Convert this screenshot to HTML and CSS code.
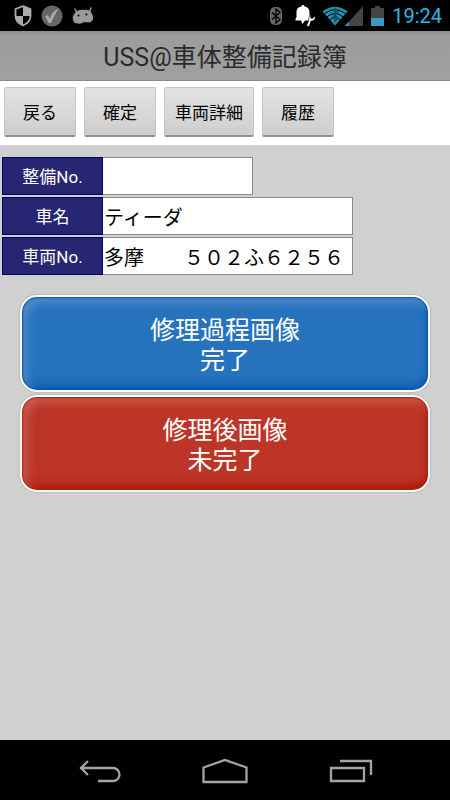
FILE: index.html
```html
<!DOCTYPE html>
<html lang="ja">
<head>
<meta charset="utf-8">
<meta name="viewport" content="width=device-width, initial-scale=1">
<title>USS@車体整備記録簿</title>
<link rel="stylesheet" href="styles.css">
</head>
<body>
<div class="status">
  <div class="status-group notices">
    <svg width="18" height="22" viewBox="0 0 18 22"><path d="M9 1.200 16.500 4v7c0 4.600-3.200 7.600-7.500 9.500C4.700 18.600 1.500 15.600 1.500 11V4z" fill="#000" stroke="#aaa" stroke-width="1.800"/><path d="M9 1.500V11h7.500V4zM9 11v9.500C4.700 18.600 1.500 15.600 1.500 11z" fill="#aaa"/></svg>
    <svg width="22" height="22" viewBox="0 0 22 22"><circle cx="11" cy="11" r="10.500" fill="#666"/><path d="M4 11.500 6.800 10 8.500 13.500C10.500 9 13 5.500 17.500 3.500 14.500 8 12.500 12.500 10 18H7.500C6.500 15.500 5.500 13.500 4 11.500z" fill="#aaa"/></svg>
    <svg width="22" height="18" viewBox="0 0 22 18"><path d="M3 2 5 6M19 1l-2 5" stroke="#999" stroke-width="1.500" stroke-linecap="round"/><path d="M3 6C5 3 9 2.500 12 3c4-1 7 1 8 4 1.500 2.500 1.500 5 0 7-2 2-5 1.500-8 1-2 1.500-4 2-6 1.500C3 16.500 1 15 1 12.500 0 10 1.500 8 3 6z" fill="#999"/><circle cx="6.500" cy="8.500" r="1" fill="#000"/><circle cx="14.500" cy="7.500" r="1" fill="#000"/></svg>
  </div>
  <div class="status-group">
    <svg class="bluetooth" width="14" height="20" viewBox="0 0 14 20"><rect x="1" y="1" width="12" height="18" rx="5" fill="#666"/><path d="m3 6.500 8 7-4 3.500V3l4 3.500-8 7" fill="none" stroke="#000" stroke-width="1.300"/></svg>
    <svg class="bell" width="21" height="22" viewBox="0 0 21 22"><path d="M8 0c1 0 1.500.6 1.500 1.500C13 2 14.500 4.500 14.500 7.500V12l-1 3.500H10L7.500 19 6 15.500H.5V14L1.500 12V7.500c0-3 1.500-5.500 5-6C6.500.6 7 0 8 0z" fill="#fff"/><path d="m11.500 21 2.500-6c-1-2 0-4 2-5l-.5 3 2 .5 2.500-2.500c1 3-1.500 5-4 5L14 21.500z" fill="#fff" stroke="#000" stroke-width=".5"/></svg>
    <svg class="wifi" width="26" height="20" viewBox="0 0 26 20"><path d="M.5 5.500C8-1 18-1 25.500 5.500L13 19.500z" fill="#238eb4"/><path d="M2.500 8c6-5.500 15-5.500 21 0M5 11c5-4.500 11-4.500 16 0M8 14c3-3 7-3 10 0" stroke="#000" stroke-width="1" fill="none"/><path d="m10 7 6 5-3 3V3l3 3-6 6" fill="none" stroke="#174f61" stroke-width="1.500"/></svg>
    <svg class="signal" width="18" height="20" viewBox="0 0 18 20"><path d="M18 0v20H0z" fill="#444"/><path d="M4 15.500V20H0z" fill="#269bc6"/></svg>
    <svg class="battery" width="13" height="20" viewBox="0 0 13 20"><path d="M4 0h5v2h4v10H0V2h4z" fill="#444"/><path d="M0 12h13v8H0z" fill="#389ac0"/></svg>
    <time class="clock">19:24</time>
  </div>
</div>
<header class="title"><h1>USS@車体整備記録簿</h1></header>
<div class="toolbar">
  <button type="button">戻る</button>
  <button type="button">確定</button>
  <button type="button" class="wide">車両詳細</button>
  <button type="button">履歴</button>
</div>
<main>
  <form class="record">
    <div class="row short"><label for="number">整備No.</label><input id="number" type="text"></div>
    <div class="row"><label for="name">車名</label><input id="name" type="text" value="ティーダ"></div>
    <div class="row"><label for="plate">車両No.</label><input id="plate" type="text" value="多摩　　５０２ふ６２５６"></div>
  </form>
  <div class="actions">
    <button type="button" class="action blue">修理過程画像<br>完了</button>
    <button type="button" class="action red">修理後画像<br>未完了</button>
  </div>
</main>
<nav class="system">
  <button type="button" aria-label="戻る"><svg width="44" height="24" viewBox="0 0 44 24"><path d="M3 9h33a6 6 0 0 1 0 13H21M11 2 4 9l7 7" fill="none" stroke="#a3a3a3" stroke-width="2.300"/></svg></button>
  <button type="button" aria-label="ホーム"><svg width="46" height="26" viewBox="0 0 46 26"><path d="M1.500 9.500 23 2l21.500 7.500V24h-43z" fill="none" stroke="#a3a3a3" stroke-width="2.300"/></svg></button>
  <button type="button" aria-label="履歴"><svg width="44" height="24" viewBox="0 0 44 24"><path d="M2 9h33v13H2zM11 2h31v14" fill="none" stroke="#a3a3a3" stroke-width="2.300"/></svg></button>
</nav>
</body>
</html>
```
FILE: styles.css
```css
* { box-sizing: border-box; }

body {
  margin: 0;
  min-height: 100vh;
  display: flex;
  flex-direction: column;
  background: #d0d0d0;
  color: #000;
  font-family: Roboto, "Noto Sans CJK JP", sans-serif;
}

button, input { font: inherit; margin: 0; }
svg { display: block; flex: none; }

.status {
  display: flex;
  justify-content: space-between;
  align-items: center;
  height: 31px;
  padding: 0 8px 0 14px;
  background: #000;
}
.status-group { display: flex; align-items: center; }
.notices { gap: 9px; }
.bell { margin-left: 12px; }
.wifi { margin-left: 6px; }
.signal { margin-left: -3px; }
.battery { margin-left: 8px; }
.clock {
  margin-left: 8px;
  color: #33b5e5;
  font-size: 20px;
  line-height: 30px;
}

.title {
  height: 50px;
  padding-top: 2px;
  border-bottom: 1px solid #888;
  background: linear-gradient(#8e8e8e, #9c9c9c 5px, #a0a0a0);
  text-align: center;
}
.title h1 {
  margin: 0;
  color: #2b2b2b;
  font-size: 25px;
  font-weight: 400;
  line-height: 50px;
}

.toolbar {
  display: flex;
  gap: 8px;
  height: 64px;
  padding: 6px 4px 8px;
  background: #fff;
}
.toolbar button {
  width: 72px;
  height: 50px;
  padding: 0;
  border: 1px solid #c4c4c4;
  border-bottom: 2px solid #929292;
  border-radius: 2px;
  background: linear-gradient(#e3e3e3, #cecece);
  color: #000;
  font-size: 17px;
}
.toolbar .wide { width: 90px; }

main { flex: 1; }

.record {
  display: flex;
  flex-direction: column;
  gap: 2px;
  padding: 12px 2px 0;
}
.row {
  display: flex;
  width: 351px;
  max-width: 100%;
  height: 38px;
}
.row.short { width: 251px; }
.row label {
  flex: none;
  width: 101px;
  border: 1px solid #000064;
  background: #262673;
  color: #fff;
  font-size: 17px;
  line-height: 38px;
  text-align: center;
}
.row input {
  flex: 1;
  min-width: 0;
  padding: 0 1px;
  border: 1px solid #8b8b8b;
  border-left: 0;
  border-radius: 0;
  background: #fff;
  color: #000;
  font-size: 20px;
}

.actions {
  display: flex;
  flex-direction: column;
  gap: 3px;
  padding: 20px 20px 0;
}
.action {
  height: 97px;
  padding: 4px 0 0;
  border: 2px solid #fafafa;
  border-radius: 17px;
  color: #fff;
  font-size: 25px;
  line-height: 30px;
}
.blue {
  background: #2672bd;
  box-shadow: 0 0 2px #999, inset 0 0 2px 1px #0a4da8, inset 6px 6px 9px #4f8cc9, inset 0 -5px 9px #075bb4;
}
.red {
  background: #bc3527;
  box-shadow: 0 0 2px #999, inset 0 0 2px 1px #a42805, inset 6px 6px 9px #c85a4e, inset 0 -5px 9px #b01606;
}

.system {
  display: flex;
  justify-content: center;
  gap: 4px;
  height: 60px;
  background: #000;
}
.system button {
  display: flex;
  align-items: center;
  justify-content: center;
  width: 122px;
  padding: 2px 0 0;
  border: 0;
  background: none;
}
```
